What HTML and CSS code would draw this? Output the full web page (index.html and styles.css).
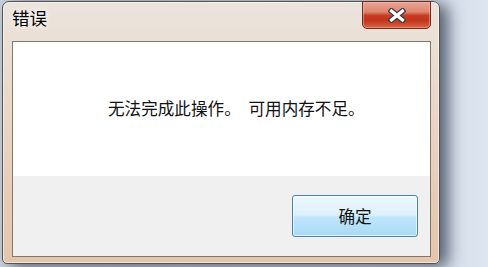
FILE: index.html
```html
<!DOCTYPE html>
<html lang="zh-CN">
<head>
<meta charset="utf-8">
<title>错误</title>
<link rel="stylesheet" href="styles.css">
</head>
<body>
<div class="window">
  <div class="titlebar"><span class="title">错误</span></div>
  <button class="close" aria-label="关闭">
    <svg class="close-x" width="18" height="15" viewBox="0 0 18 15">
      <path d="M3.5 3 L14.5 12 M14.5 3 L3.5 12" stroke="#3b3b3b" stroke-width="5.6" stroke-linecap="square" fill="none"/>
      <path d="M3.5 3 L14.5 12 M14.5 3 L3.5 12" stroke="#ffffff" stroke-width="3.2" stroke-linecap="square" fill="none"/>
    </svg>
  </button>
  <div class="client">
    <div class="message">无法完成此操作。 可用内存不足。</div>
    <div class="footer"><button class="ok">确定</button></div>
  </div>
</div>
</body>
</html>
```
FILE: styles.css
```css
html, body {
  margin: 0;
}
body {
  width: 488px;
  height: 267px;
  overflow: hidden;
  box-sizing: border-box;
  padding: 1px 0 0 2px;
  background: linear-gradient(90deg, #c9d3de 0%, #d6dfe9 90%, #dde6f0 100%);
  font-family: "Noto Sans CJK SC", "Noto Sans", sans-serif;
}
.window {
  position: relative;
  width: 438px;
  height: 263px;
  box-sizing: border-box;
  border: 1px solid #56534f;
  border-radius: 7px 7px 5px 5px;
  background: linear-gradient(#ebe4dd 0%, #e9dbcd 30%, #e6cdb8 70%, #e3c6ad 100%);
  box-shadow: inset 0 0 0 1px rgba(255, 255, 255, 0.55), 8px 3px 16px rgba(30, 40, 60, 0.7);
  display: flex;
  flex-direction: column;
  padding: 0 8px 6px 9px;
}
.titlebar {
  height: 39px;
  box-sizing: border-box;
  padding: 4px 0 0 0;
}
.title {
  font-size: 17.5px;
  line-height: 24px;
  color: #000;
  text-shadow: 0 0 4px rgba(255, 255, 255, 0.95), 0 0 8px rgba(255, 255, 255, 0.7);
}
.close {
  position: absolute;
  top: -1px;
  right: 8px;
  width: 69px;
  height: 28px;
  margin: 0;
  padding: 0;
  box-sizing: border-box;
  border: 1px solid #6e2a1c;
  border-radius: 0 0 5px 5px;
  background: linear-gradient(#e8a595 0%, #de8570 38%, #c73c22 52%, #c0341c 70%, #db6344 100%);
  box-shadow: inset 0 0 0 1px rgba(255, 200, 185, 0.45);
  display: flex;
  align-items: center;
  justify-content: center;
}
.close-x {
  display: block;
}
.client {
  flex: 1;
  border: 1px solid #857667;
  background: #f0f0f0;
  display: flex;
  flex-direction: column;
}
.message {
  height: 134px;
  box-sizing: border-box;
  background: #ffffff;
  padding: 54px 0 0 95px;
  font-size: 16.6px;
  line-height: 24px;
  word-spacing: 4px;
  color: #111;
  white-space: pre;
}
.footer {
  flex: 1;
  display: flex;
  justify-content: flex-end;
  align-items: flex-start;
  padding: 19px 12px 0 0;
}
.ok {
  width: 126px;
  height: 42px;
  margin: 0;
  border: 1px solid #4a7fa8;
  border-radius: 3px;
  background: linear-gradient(#edf7fd 0%, #dcf1fc 48%, #c0e6fb 52%, #a9daf5 100%);
  box-shadow: inset 0 0 0 1px rgba(255, 255, 255, 0.7);
  font-family: "Noto Sans CJK SC", "Noto Sans", sans-serif;
  font-size: 16.6px;
  color: #111;
  padding: 0;
}
```
